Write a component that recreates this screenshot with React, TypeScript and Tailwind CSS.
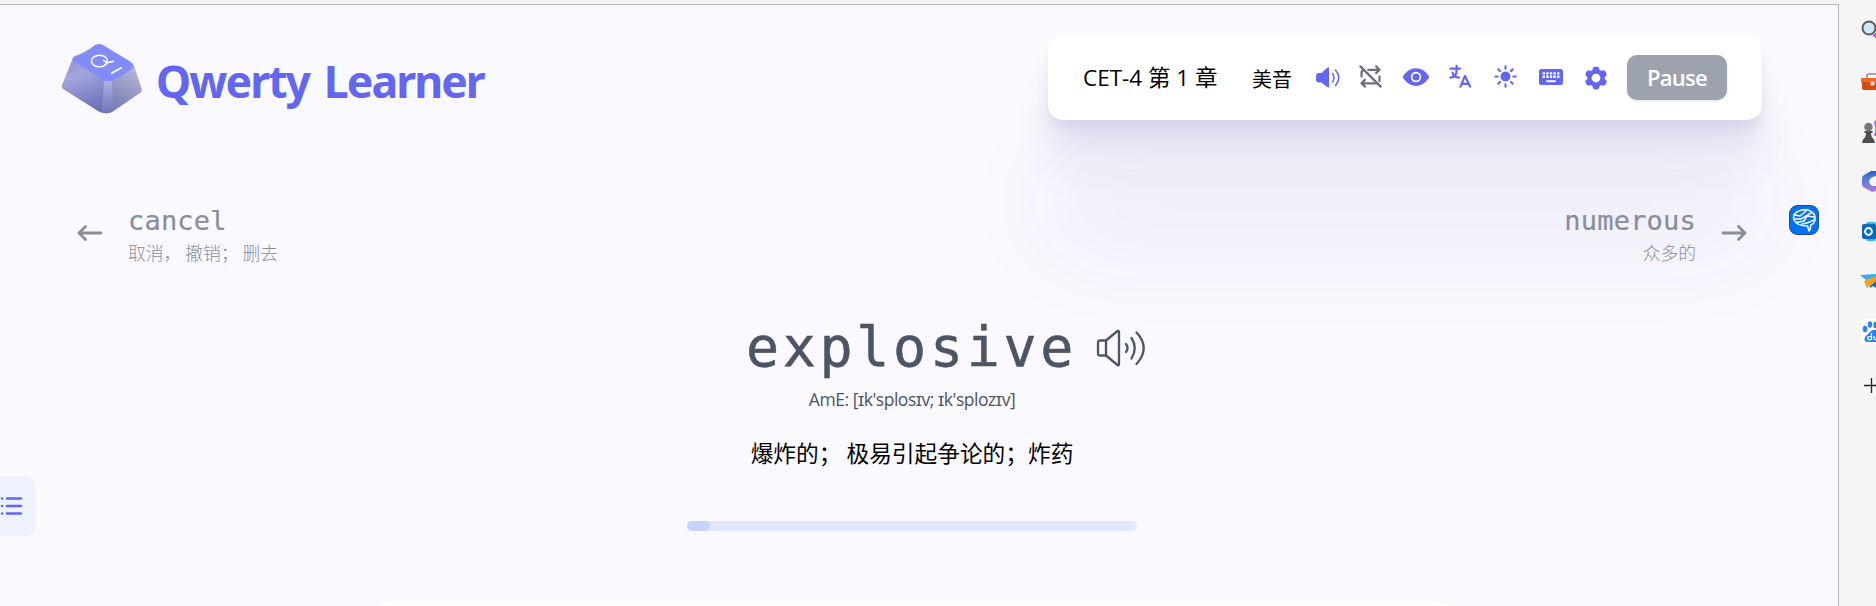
import React from 'react';
import { TbRepeatOff } from 'react-icons/tb';
import { IoEye, IoSunny } from 'react-icons/io5';
import { HiCog6Tooth } from 'react-icons/hi2';

function KeycapLogo() {
  return (
    <svg className="h-[71px] w-[82px] shrink-0" viewBox="0 0 82 71">
      <defs>
        <linearGradient id="capLeft" x1="0.3" y1="0" x2="0.6" y2="1">
          <stop offset="0" stopColor="#8f92da" />
          <stop offset="0.3" stopColor="#a3a6dd" />
          <stop offset="1" stopColor="#6c70b6" />
        </linearGradient>
        <linearGradient id="capRight" x1="0.7" y1="0" x2="0.3" y2="1">
          <stop offset="0" stopColor="#b9b9d6" />
          <stop offset="1" stopColor="#7275b5" />
        </linearGradient>
        <linearGradient id="capEdge" x1="0" y1="0" x2="0" y2="1">
          <stop offset="0" stopColor="#b1b3e6" />
          <stop offset="1" stopColor="#7376b6" />
        </linearGradient>
      </defs>
      <path d="M12 15 L46 38 L43 70 Q40 70 37 68 L2 46 Q0 44 1 42 Z" fill="url(#capLeft)" />
      <path d="M46 38 L73 22 L81 47 Q81 49 79 50 L51 69 Q47 71 43 70 Z" fill="url(#capRight)" />
      <path d="M43 36 L51 36 L52 68 Q46 72 41 69 Z" fill="url(#capEdge)" />
      <path d="M34 2 Q38 0 42 2 L70 19 Q75 23 70 27 L53 37 Q46 40 40 36 L13 18 Q10 15 14 13 Q24 10 34 2 Z" fill="#818cf8" />
      <ellipse cx="38.500" cy="18" rx="8" ry="5.800" fill="none" stroke="#fff" strokeWidth="1.500" />
      <path d="M42 17 Q46 21 53 18 M43 22 L48 19" fill="none" stroke="#fff" strokeWidth="1.400" />
      <path d="M51 30 L60 25" stroke="#fff" strokeWidth="2" strokeLinecap="round" />
    </svg>
  );
}

function SpeakerFilled() {
  return (
    <svg className="h-[25px] w-[25px]" viewBox="0 0 25 25" fill="none" stroke="currentColor" strokeLinecap="round">
      <path d="M4 8 H6.500 L12.500 2.600 Q14 1.500 14 3.500 V21.500 Q14 23.500 12.500 22.300 L6.500 17.500 H4 Q1 17.500 1 14.500 V11 Q1 8 4 8 Z" fill="currentColor" stroke="none" />
      <path d="M17.500 8.500 Q20.500 12.600 17.500 17" strokeWidth="1.500" />
      <path d="M20.500 5 Q27 12.600 20.500 20.500" strokeWidth="1.500" />
    </svg>
  );
}

function TranslateIcon() {
  return (
    <svg className="size-[27px]" viewBox="0 0 24 24" fill="none" stroke="currentColor" strokeWidth="2" strokeLinecap="round" strokeLinejoin="round">
      <path d="M3 5h8.500 M8.500 2.500v4.500c0 3.500-2.500 5.500-5.500 6 M5 8.500c0 2.500 2.952 4.400 5.700 4.500 M12 21l4-9.500l4.500 9.500 M19.100 18.500h-6.200" />
    </svg>
  );
}

function KeyboardIcon() {
  return (
    <svg className="h-[16px] w-[24px]" viewBox="0 0 24 16">
      <rect width="24" height="16" rx="2.200" fill="currentColor" />
      <path d="M3.600 4.400 H20.600 M3.600 7.700 H20.600" stroke="#fff" strokeWidth="2.400" strokeDasharray="2.400 1.200" />
      <path d="M7.200 12.200 H16.800" stroke="#fff" strokeWidth="1.900" />
    </svg>
  );
}

function SpeakerOutline() {
  return (
    <svg className="h-[38px] w-[50px]" viewBox="0 0 50 38" fill="none" stroke="currentColor" strokeWidth="2.300" strokeLinecap="round" strokeLinejoin="round">
      <path d="M10 11.500 H4 Q2 11.500 2 13.500 V24.500 Q2 26.500 4 26.500 H10 Z" />
      <path d="M10 11.500 L21.500 2 Q23 1.300 23 3 V35 Q23 37 21.500 36 L10 26.500" />
      <path d="M30 15 Q33 19 30 23" />
      <path d="M35.500 9 Q42 19 35.500 29.500" />
      <path d="M40.500 3.500 Q55 19 40.500 35" />
    </svg>
  );
}

function Arrow({ flip }: { flip?: boolean }) {
  return (
    <svg className={flip ? 'h-[18px] w-[26px] rotate-180' : 'h-[18px] w-[26px]'} viewBox="0 0 26 18" fill="none" stroke="currentColor" strokeWidth="2.800" strokeLinecap="round" strokeLinejoin="round">
      <path d="M2 9 H24 M8.500 2.500 L2 9 L8.500 15.500" />
    </svg>
  );
}

function Toolbar() {
  return (
    <div className="mt-[30px] flex h-[85px] w-[714px] items-center rounded-[15px] bg-white pl-[35px] text-black shadow-[0_4px_4px_rgba(60,40,130,0.02),0_10px_10px_rgba(60,40,130,0.04),0_22px_22px_rgba(60,40,130,0.055),0_50px_42px_rgba(60,40,130,0.05),0_125px_100px_rgba(60,40,130,0.07)]">
      <div className="w-[168px] whitespace-nowrap font-['Open_Sans','Noto_Sans_CJK_SC',sans-serif] text-[22.500px]">CET-4 第 1 章</div>
      <div className="w-[60px] whitespace-nowrap pl-px pt-[2px] font-['Noto_Sans_CJK_SC',sans-serif] text-[20px]">美音</div>
      <div className="-ml-[8px] -mt-[2px] flex items-center text-[25px] text-[#6366f1] [&>span]:flex [&>span]:w-[45px] [&>span]:justify-center">
        <span className="pl-[4px] pt-px"><SpeakerFilled /></span>
        <span className="text-gray-500"><TbRepeatOff className="size-[27px]" /></span>
        <span><IoEye className="size-[28px]" /></span>
        <span><TranslateIcon /></span>
        <span><IoSunny className="size-[25px]" /></span>
        <span><KeyboardIcon /></span>
        <span className="pt-[2px]"><HiCog6Tooth className="size-[28px]" /></span>
      </div>
      <button className="ml-[9px] h-[45px] w-[100px] rounded-[10px] bg-[#9ca3af] font-['Open_Sans',sans-serif] text-[22px] font-semibold tracking-[-0.700px] text-white shadow-sm">Pause</button>
    </div>
  );
}

function BrainBadge() {
  return (
    <svg className="absolute left-[1789px] top-[200px] size-[30px]" viewBox="0 0 30 30" fill="none" stroke="#fff" strokeWidth="1.500" strokeLinecap="round">
      <rect x="0.500" y="0.500" width="29" height="29" rx="8" fill="#0072f5" stroke="#1b4f8e" strokeWidth="1" />
      <path d="M20 26 L18.500 21 Q8 21 5 15 Q3 8 11 5.500 Q21 3 25.500 10 Q28 17 21.500 20.500 Q22 24 20 26" />
      <path d="M6 10 L11 11 L17 6 M5 14 L12 14 L22 8 M7 17.500 L15 16 L18 11 L25 12 M13 19 L18 18 L25 15" />
    </svg>
  );
}

function SidebarIcons() {
  return (
    <svg className="h-[400px] w-[16px]" viewBox="0 0 16 400">
      <defs>
        <linearGradient id="office" x1="0" y1="0" x2="0" y2="1">
          <stop offset="0" stopColor="#2c5fc4" />
          <stop offset="0.400" stopColor="#4f7fe0" />
          <stop offset="1" stopColor="#b07ae0" />
        </linearGradient>
      </defs>
      <path d="M14 34 L18 38" stroke="#b455e8" strokeWidth="3.500" />
      <circle cx="9" cy="28" r="6.500" fill="#cdeafa" stroke="#5c5c5c" strokeWidth="2" />
      <path d="M7 79 V76 Q7 74 9 74 H16" fill="none" stroke="#8d9196" strokeWidth="1.600" />
      <path d="M1 78 H16 V90 H4 Q2 90 2 88 V83 L1 82 Z" fill="#d84a12" />
      <path d="M1 78 H16 V82 H1 Z" fill="#ef6a26" />
      <circle cx="12.500" cy="83.500" r="2.200" fill="#d9dde0" />
      <path d="M14 122 L16 120 V136 H14 L15.500 129 Z" fill="#b95cf0" />
      <circle cx="8.500" cy="127" r="4.200" fill="#787878" />
      <path d="M4.500 131 H12.500 V133 H11 Q11 137 14 139.500 L15 143 H2 L3 139.500 Q6 137 6 133 H4.500 Z" fill="#4f4f4f" />
      <path d="M16 171 L11 171 L4 175 Q2 176 2 179 V184 Q2 187 5 188 L12 192 L16 191 V186 L12 186 Q9 184 9 181 Q10 177 16 176 Z" fill="url(#office)" />
      <rect x="6" y="222" width="10" height="19" rx="2" fill="#35b8f1" />
      <rect x="2" y="224" width="14" height="15" rx="2" fill="#0a69b8" />
      <circle cx="8.500" cy="231.500" r="3.400" fill="none" stroke="#fff" strokeWidth="2" />
      <path d="M0 275 L16 274 V279 L6 280 Z" fill="#35aef0" />
      <path d="M4 281 L16 276 V281 L7 288 Z" fill="#f0a01c" />
      <path d="M10 286 L16 281 V288 L13 286 L10 288 Z" fill="#1967d2" />
      <rect x="0" y="319" width="16" height="25" fill="#fff" />
      <g fill="#2b80f5">
        <ellipse cx="5" cy="329" rx="2.300" ry="3.200" />
        <ellipse cx="10" cy="324.500" rx="2.200" ry="3.200" />
        <ellipse cx="15.500" cy="325" rx="2.100" ry="3.200" />
        <path d="M16 330 Q12 329 9 333 L5 337 Q3 342 8 342 H16 Z" />
      </g>
      <path d="M11.500 333 V340 M11.500 337 Q7.500 335.500 7.500 338.500 Q8.500 341 11.500 339 M14 336 V339 L16 340" stroke="#fff" strokeWidth="1.200" fill="none" />
      <path d="M4 385.500 H16 M11.500 378 V393" stroke="#222" strokeWidth="1.300" />
    </svg>
  );
}

export default function App() {
  return (
    <div className="flex h-[606px] w-[1876px] overflow-hidden bg-[#f5f5f5] font-['Open_Sans','Noto_Sans_CJK_SC',sans-serif]">
      <div className="relative mt-[4px] h-[602px] w-[1839px] shrink-0 overflow-hidden border-r border-t border-[#b8b8bb] bg-[#faf9ff]">
        <header className="flex justify-between pl-[61px] pr-[76px]">
          <div className="flex items-start">
            <div className="mt-[38px]"><KeycapLogo /></div>
            <h1 className="ml-[13px] mt-[46px] whitespace-nowrap font-['Noto_Sans',sans-serif] text-[44.500px] font-bold leading-[60px] tracking-[-1.900px] text-[#6366f1] [word-spacing:5px]">Qwerty Learner</h1>
          </div>
          <Toolbar />
        </header>

        <div className="relative mt-[76px] flex h-[84px] justify-between pl-[77px] pr-[91px] text-[#868e9b]">
          <div className="flex">
            <div className="mt-[28px]"><Arrow /></div>
            <div className="ml-[25px] whitespace-nowrap">
              <div className="h-[41px] font-['DejaVu_Sans_Mono',monospace] text-[27px] leading-[50px] tracking-[0.200px] [-webkit-text-stroke:0.200px]">cancel</div>
              <div className="font-['Noto_Sans_CJK_SC',sans-serif] text-[17.800px] font-light leading-[30px]">取消， 撤销； 删去</div>
            </div>
          </div>
          <div className="flex">
            <div className="mr-[25px] whitespace-nowrap text-right">
              <div className="h-[41px] font-['DejaVu_Sans_Mono',monospace] text-[27px] leading-[50px] tracking-[0.200px] [-webkit-text-stroke:0.200px]">numerous</div>
              <div className="font-['Noto_Sans_CJK_SC',sans-serif] text-[17.800px] font-light leading-[30px]">众多的</div>
            </div>
            <div className="mt-[28px]"><Arrow flip /></div>
          </div>
        </div>

        <main className="relative flex w-[1824px] flex-col items-center text-[#4b5563]">
          <div className="ml-[68px] mt-[28px] flex h-[80px] items-center">
            <span className="-mt-[2px] font-['DejaVu_Sans_Mono',monospace] text-[55px] leading-[75px] tracking-[3.650px] [-webkit-text-stroke:0.500px]">explosive</span>
            <span className="ml-[19px]"><SpeakerOutline /></span>
          </div>
          <div className="-mt-px mb-px text-[17.500px] leading-[25px] tracking-[-0.460px]">AmE: [ɪk'splosɪv; ɪk'splozɪv]</div>
          <div className="mt-[20px] whitespace-nowrap font-['Noto_Sans_CJK_SC',sans-serif] text-[22.700px] leading-[40px] text-black">爆炸的； 极易引起争论的；炸药</div>
          <div className="mt-[48px] h-[10px] w-[450px] rounded-full bg-[#e0e7ff]">
            <div className="h-full w-[23px] rounded-full bg-[#c7d2fe]" />
          </div>
          <div className="mt-[70px] h-[80px] w-[1080px] rounded-[15px] bg-[#fefeff]" />
        </main>

        <button className="absolute left-0 top-[471px] h-[60px] w-[36px] rounded-r-[10px] bg-[#eef2ff]">
          <svg className="h-[60px] w-[36px]" viewBox="0 0 36 60" stroke="#6366f1" strokeWidth="2.500" strokeLinecap="round">
            <path d="M7 22.500 H21 M7 30 H21 M7 37.500 H21 M2 22.500 H2.100 M2 30 H2.100 M2 37.500 H2.100" />
          </svg>
        </button>
        <BrainBadge />
      </div>
      <aside className="flex w-[37px] shrink-0 justify-end overflow-hidden bg-[#f5f5f5]">
        <SidebarIcons />
      </aside>
    </div>
  );
}
